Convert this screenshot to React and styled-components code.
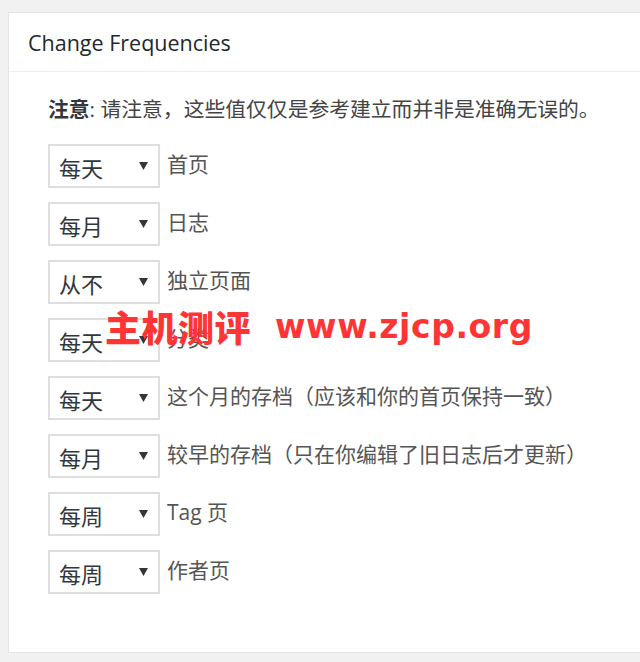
import React from "react";
import styled, { createGlobalStyle } from "styled-components";

const GlobalStyle = createGlobalStyle`
  html, body {
    margin: 0;
    padding: 0;
    background: #f1f1f1;
    overflow: hidden;
  }
  body {
    padding: 12px 0 0 8px;
    font-family: "Open Sans", "Noto Sans CJK SC", sans-serif;
  }
`;

const Panel = styled.section`
  position: relative;
  width: 660px;
  background: #fff;
  border: 1px solid #e5e5e5;
  box-shadow: 0 1px 1px rgba(0, 0, 0, 0.04);
`;

const PanelHeader = styled.h2`
  margin: 0;
  height: 58px;
  display: flex;
  align-items: center;
  padding: 0 19px;
  border-bottom: 1px solid #eee;
  font-family: "Open Sans", sans-serif;
  font-weight: 400;
  font-size: 21.5px;
  color: #23282d;
`;

const PanelBody = styled.div`
  padding: 23px 0 58px 39px;
`;

const Note = styled.p`
  margin: 0 0 21px;
  font-family: "Open Sans", "Noto Sans CJK SC", sans-serif;
  font-size: 20.8px;
  line-height: 28px;
  color: #444;
`;

const NoteLead = styled.strong`
  font-weight: 700;
  color: #32373c;
`;

const Rows = styled.div`
  display: flex;
  flex-direction: column;
  gap: 14px;
`;

const Row = styled.label`
  display: flex;
  align-items: center;
  gap: 7px;
`;

const SelectWrap = styled.div`
  position: relative;
  width: 112px;
  height: 44px;
  flex: none;
`;

const Select = styled.select`
  appearance: none;
  -webkit-appearance: none;
  box-sizing: border-box;
  width: 100%;
  height: 100%;
  margin: 0;
  border: 2px solid #dedede;
  border-radius: 0;
  background: #fff;
  padding: 2px 0 0 9px;
  font-family: "Noto Sans CJK SC", sans-serif;
  font-size: 22px;
  color: #32373c;
  outline: none;
`;

const Arrow = styled.svg`
  position: absolute;
  right: 12px;
  top: 50%;
  width: 9px;
  height: 9px;
  margin-top: -5px;
  pointer-events: none;
`;

const Label = styled.span`
  font-family: "Open Sans", "Noto Sans CJK SC", sans-serif;
  font-size: 21px;
  line-height: 28px;
  color: #555;
  margin-top: -5px;
`;

const Watermark = styled.div`
  position: absolute;
  left: 96px;
  top: 287px;
  display: flex;
  align-items: center;
  gap: 24px;
  color: #ff3535;
  pointer-events: none;
  white-space: nowrap;
`;

const WatermarkCn = styled.span`
  font-family: "Noto Sans CJK SC", sans-serif;
  font-weight: 900;
  font-size: 36px;
  letter-spacing: 0.5px;
`;

const WatermarkUrl = styled.span`
  font-family: "DejaVu Sans", sans-serif;
  font-weight: 700;
  font-size: 33px;
  letter-spacing: 0.6px;
`;

const rows = [
  ["daily", "首页"],
  ["monthly", "日志"],
  ["never", "独立页面"],
  ["daily", "分类"],
  ["daily", "这个月的存档（应该和你的首页保持一致）"],
  ["monthly", "较早的存档（只在你编辑了旧日志后才更新）"],
  ["weekly", "Tag 页"],
  ["weekly", "作者页"],
];

const options = [
  ["always", "总是"],
  ["hourly", "每小时"],
  ["daily", "每天"],
  ["weekly", "每周"],
  ["monthly", "每月"],
  ["yearly", "每年"],
  ["never", "从不"],
];

export default function App() {
  return (
    <>
      <GlobalStyle />
      <Panel>
        <PanelHeader>Change Frequencies</PanelHeader>
        <PanelBody>
          <Note>
            <NoteLead>注意</NoteLead>: 请注意，这些值仅仅是参考建立而并非是准确无误的。
          </Note>
          <Rows>
            {rows.map(([value, label], i) => (
              <Row key={i}>
                <SelectWrap>
                  <Select defaultValue={value}>
                    {options.map(([v, t]) => (
                      <option key={v} value={v}>
                        {t}
                      </option>
                    ))}
                  </Select>
                  <Arrow viewBox="0 0 9 9">
                    <path d="M0 1h9L4.5 9z" fill="#32373c" />
                  </Arrow>
                </SelectWrap>
                <Label>{label}</Label>
              </Row>
            ))}
          </Rows>
        </PanelBody>
        <Watermark>
          <WatermarkCn>主机测评</WatermarkCn>
          <WatermarkUrl>www.zjcp.org</WatermarkUrl>
        </Watermark>
      </Panel>
    </>
  );
}
